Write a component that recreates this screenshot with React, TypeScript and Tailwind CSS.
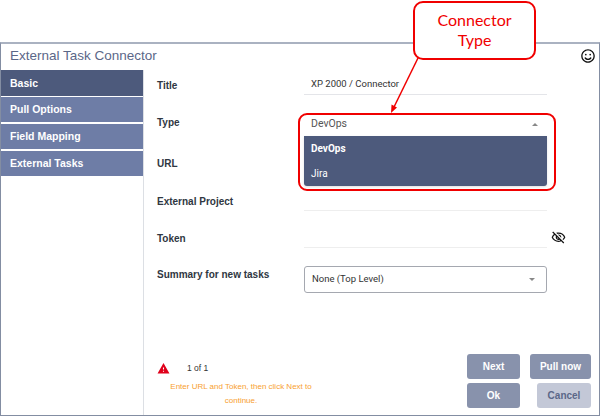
import { MdOutlineVisibilityOff, MdWarning } from 'react-icons/md'
import { FaRegSmile } from 'react-icons/fa'

const sideItems = ['Basic', 'Pull Options', 'Field Mapping', 'External Tasks']

function Label({ top, children }: { top: string; children: React.ReactNode }) {
  return <div className={`w-[147px] shrink-0 text-[10px] leading-[14px] font-bold text-[#2f3742] ${top}`}>{children}</div>
}

function App() {
  return (
    <div className="relative w-[600px] h-[416px] bg-white pt-[42px] font-['Liberation_Sans',sans-serif] overflow-hidden">
      {/* Window */}
      <div className="h-[374px] flex flex-col border-t-2 border-l border-r border-b border-t-[#aab2c1] border-l-[#838da2] border-r-[#838da2] border-b-[#838da2]">
        <div className="h-[26px] flex items-center justify-between pl-[9px] pr-[4px] pb-[1px]">
          <span className="text-[13.5px] text-[#5b6788]">External Task Connector</span>
          <FaRegSmile className="text-[14px] mb-[1px] text-[#111]" />
        </div>

        <div className="flex flex-1 min-h-0">
          {/* Sidebar */}
          <div className="w-[143px] border-r border-[#dcdfe4] flex flex-col">
            {sideItems.map((item, i) => (
              <div
                key={item}
                className={`flex items-center pl-[9px] text-[10.5px] font-bold text-white ${
                  i === 0 ? 'h-[26px] pt-[1px] bg-[#4d5a7c] mb-[1px]' : 'h-[25px] bg-[#6e7da6] mb-[2px]'
                }`}
              >
                {item}
              </div>
            ))}
          </div>

          {/* Form */}
          <div className="flex-1 flex flex-col pl-[13px] pr-[8px]">
            <div className="h-[25px] flex items-start">
              <Label top="mt-[9px]">Title</Label>
              <div className="w-[243px] h-[25px] border-b border-[#e4e5e9] pb-[3px] pl-[7px] flex items-end text-[9.5px] leading-[14px] font-['Roboto',sans-serif] text-[#333]">
                XP 2000 / Connector
              </div>
            </div>
            <div className="h-[41px] flex items-start">
              <Label top="mt-[21px]">Type</Label>
              <div className="w-[243px] mt-[22px] pl-[7px] pr-[9px] flex items-center justify-between text-[10.5px] leading-[14px] font-['Roboto',sans-serif] text-[#555]">
                DevOps
                <span className="w-0 h-0 border-x-[3px] border-x-transparent border-b-[3px] border-b-[#888]" />
              </div>
            </div>
            <div className="h-[37px] flex items-start">
              <Label top="mt-[21px]">URL</Label>
            </div>
            <div className="h-[38px] flex items-start">
              <Label top="mt-[22px]">External Project</Label>
              <div className="w-[243px] h-[38px] border-b border-[#eeeeee]" />
            </div>
            <div className="h-[37px] flex items-start">
              <Label top="mt-[21px]">Token</Label>
              <div className="w-[243px] h-[37px] border-b border-[#eeeeee]" />
              <MdOutlineVisibilityOff className="ml-[4px] mt-[19px] text-[15px] text-[#111]" />
            </div>
            <div className="h-[45px] flex items-start">
              <Label top="mt-[20px]">Summary for new tasks</Label>
              <div className="w-[243px] h-[27px] mt-[18px] shrink-0 border border-[#a5a8b0] rounded-[3px] pl-[7px] pr-[11px] flex items-center justify-between text-[9.5px] font-['Roboto',sans-serif] text-[#333]">
                None (Top Level)
                <span className="w-0 h-0 border-x-[3px] border-x-transparent border-t-[3px] border-t-[#888]" />
              </div>
            </div>

            {/* Footer */}
            <div className="flex-1 flex items-end justify-between pb-[7px]">
              <div className="w-[168px]">
                <div className="flex items-center gap-[17px] text-[8.5px] text-[#333]">
                  <MdWarning className="text-[13px] text-[#e0001b]" />
                  <span>1 of 1</span>
                </div>
                <div className="mt-[5px] px-[8px] text-center text-[8px] leading-[14px] text-[#f8a030]">
                  Enter URL and Token, then click Next to continue.
                </div>
              </div>
              <div className="grid grid-cols-[53px_61px] gap-x-[10px] gap-y-[4px] text-[10px] font-bold">
                <button className="h-[25px] rounded-[3px] bg-[#8892ac] text-white">Next</button>
                <button className="h-[25px] rounded-[3px] bg-[#8892ac] text-white">Pull now</button>
                <button className="h-[25px] rounded-[3px] bg-[#8892ac] text-white">Ok</button>
                <button className="h-[25px] w-[54px] justify-self-end rounded-[3px] bg-[#c3c8d7] text-[#5b6788]">Cancel</button>
              </div>
            </div>
          </div>
        </div>
      </div>

      {/* Open dropdown */}
      <div className="absolute left-[304px] top-[136px] w-[243px] h-[50px] bg-[#4d5a7c] rounded-b-[3px] shadow-sm text-[10px] font-['Roboto',sans-serif] text-white">
        <div className="h-[25px] pl-[7px] flex items-center font-bold">DevOps</div>
        <div className="h-[25px] pl-[7px] flex items-center">Jira</div>
      </div>

      {/* Annotation */}
      <div className="absolute left-[298px] top-[113px] w-[258px] h-[78px] border-2 border-[#f00000] rounded-[9px]" />
      <svg className="absolute left-0 top-0" width="600" height="416" viewBox="0 0 600 416" fill="none">
        <path d="M418 58 L394 107" stroke="#f00000" strokeWidth="1.5" />
        <path d="M391 113 L391.5 104.5 L397 107.5 Z" fill="#f00000" />
      </svg>
      <div className="absolute left-[413px] top-[1px] w-[123px] h-[59px] bg-white border-2 border-[#f00000] rounded-[10px] flex flex-col items-center justify-center pb-[2px] text-[16px] leading-[20px] font-['Lato',sans-serif] text-[#f00000]">
        <span>Connector</span>
        <span>Type</span>
      </div>
    </div>
  )
}

export default App
